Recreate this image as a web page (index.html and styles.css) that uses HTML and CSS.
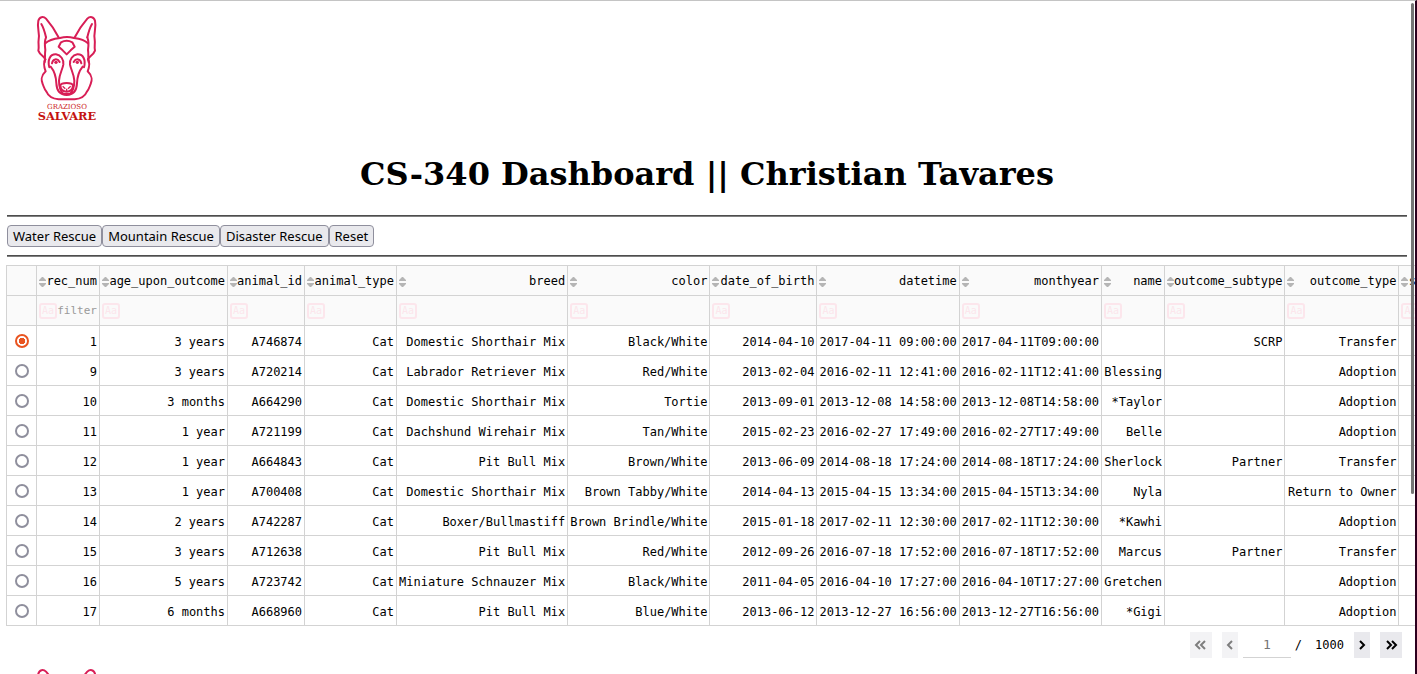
FILE: index.html
```
<!DOCTYPE html>
<html lang="en">
<head>
<meta charset="utf-8">
<title>CS-340 Dashboard</title>
<link rel="stylesheet" href="styles.css">
</head>
<body>
<svg class="defs" aria-hidden="true">
  <symbol id="dog" viewBox="48 42 186 324">
    <g fill="none" stroke="#d81e56" stroke-width="6" stroke-linecap="round" stroke-linejoin="round">
      <path d="M78 112 C74 94 70 82 64 72 M202 112 C206 94 210 82 216 72"/>
      <path d="M76 178 C72 168 60 166 55 152 C58 142 54 130 56 118 C60 98 50 84 55 62 C58 50 70 48 78 56 C92 72 104 88 117 114"/>
      <path d="M204 178 C208 168 220 166 225 152 C222 142 226 130 224 118 C220 98 230 84 225 62 C222 50 210 48 202 56 C188 72 176 88 163 114"/>
      <path d="M76 130 C88 118 104 116 120 114 C134 110 148 110 162 114 C178 116 192 118 204 130"/>
      <path d="M78 112 C74 122 74 136 76 150 C74 162 76 174 74 186 M202 112 C206 122 206 136 204 150 C206 162 204 174 206 186"/>
      <path d="M76 178 C68 190 74 206 77 214 C62 228 64 244 68 252 C72 262 74 270 80 276 C86 292 98 296 116 298 L164 298 C182 296 194 292 200 276 C206 270 208 262 212 252 C216 244 218 228 203 214 C206 206 212 190 204 178"/>
      <path d="M116 140 L123 127 C134 121 146 121 157 127 L164 140 L152 151 L140 163 L128 151 Z"/>
      <path d="M88 202 C82 180 90 162 108 163 C122 165 132 178 130 194 C127 210 118 222 117 242 C117 256 120 272 130 282 L150 282 C160 272 163 256 163 242 C162 222 153 210 150 194 C148 178 158 165 172 163 C190 162 198 180 192 202"/>
      <path d="M96 190 C98 176 112 174 119 186 M184 190 C182 176 168 174 161 186"/>
      <path d="M92 200 C102 212 108 226 109 250 C110 274 122 285 140 285 C158 285 170 274 171 250 C172 226 178 212 188 200"/>
      <path d="M121 256 C124 247 156 247 159 256 C158 270 150 275 140 275 C130 275 122 270 121 256 Z"/>
    </g>
    <g fill="none" stroke="#d81e56" stroke-width="4"><path d="M140 266 V274 M128 259 L136 266 M152 259 L144 266"/></g>
    <circle cx="108" cy="187" r="5" fill="#d81e56"/><circle cx="172" cy="187" r="5" fill="#d81e56"/>
  </symbol>
  <symbol id="sort" viewBox="0 0 7 12"><path fill="#b5b5b5" d="M3 1h1l3 3v1H0V4zM0 7h7v1l-3 3H3L0 8z"/></symbol>
</svg>
<div class="page">
  <svg class="logo" viewBox="48 42 186 324" role="img" aria-label="Grazioso Salvare">
    <use href="#dog" x="48" y="42" width="186" height="324"/>
    <text class="logo-small" x="141" y="326" text-anchor="middle">GRAZIOSO</text>
    <text class="logo-big" x="141" y="361" text-anchor="middle">SALVARE</text>
  </svg>
  <h1 class="title">CS-340 Dashboard || Christian Tavares</h1>
  <hr class="rule">
  <div class="actions"><button>Water Rescue</button><button>Mountain Rescue</button><button>Disaster Rescue</button><button>Reset</button></div>
  <hr class="rule">
  <table class="grid">
    <thead>
      <tr id="heads"><th class="pick"></th></tr>
      <tr id="filters"><th class="pick"></th></tr>
    </thead>
    <tbody id="rows"></tbody>
  </table>
  <nav class="pager" aria-label="Pages">
    <button disabled aria-label="First page"><svg width="13" height="12" viewBox="0 0 13 12"><path d="M6 2 2 6l4 4M11 2 7 6l4 4"/></svg></button>
    <button class="narrow" disabled aria-label="Previous page"><svg width="8" height="12" viewBox="0 0 8 12"><path d="M6 2 2 6l4 4"/></svg></button>
    <input class="page-no" type="text" placeholder="1" aria-label="Page number">
    <span class="slash">/</span>
    <span class="total">1000</span>
    <button class="narrow" aria-label="Next page"><svg width="8" height="12" viewBox="0 0 8 12"><path d="M2 2l4 4-4 4"/></svg></button>
    <button aria-label="Last page"><svg width="13" height="12" viewBox="0 0 13 12"><path d="M2 2l4 4-4 4M7 2l4 4-4 4"/></svg></button>
  </nav>
  <svg class="logo logo-next" viewBox="48 42 186 324" role="img" aria-label="Grazioso Salvare"><use href="#dog" x="48" y="42" width="186" height="324"/></svg>
</div>
<div class="scroll-thumb"></div>
<script src="table.js"></script>
</body>
</html>
```
FILE: styles.css
```
* { box-sizing: border-box; }
html { height: 100%; overflow: hidden; background: #fff; }
body {
  position: relative;
  height: 100%;
  margin: 0;
  overflow: hidden;
  border-top: 1px solid #c4c4c4;
  border-right: 2px solid #2c001e;
  color: #000;
}
.defs { position: absolute; width: 0; height: 0; }
.page { padding: 13px 8px 0 7px; }
.logo { display: block; width: 62px; height: 108px; margin-left: 29px; }
.logo-small { font: 21px "DejaVu Serif", serif; fill: #cc1a20; }
.logo-big { font: bold 34px "DejaVu Serif", serif; fill: #c4120f; }
.title {
  margin: 33px 0 22px;
  font: bold 32px/38px "DejaVu Serif", serif;
  text-align: center;
}
.rule { height: 2px; margin: 0; border: 0; border-top: 1px solid #4d4d4d; background: #808080; }
.actions { display: flex; padding: 8px 0; }
.actions button {
  height: 22px;
  padding: 0 5px;
  border: 1px solid #8f8f9d;
  border-radius: 4px;
  background: #e9e9ed;
  color: #000;
  font: 13px/20px "Noto Sans", sans-serif;
}
.grid {
  margin: 8px 0 0 -1px;
  border-collapse: collapse;
  font: 12px/15px "DejaVu Sans Mono", monospace;
  white-space: nowrap;
}
.grid th, .grid td {
  height: 30px;
  padding: 2px 2px 0;
  border: 1px solid #d3d3d3;
  text-align: right;
  font-weight: normal;
}
.grid td { padding-top: 4px; }
.grid th { background: #fafafa; }
#filters th { padding-top: 0; }
.grid .pick { width: 30px; min-width: 30px; padding: 0; text-align: center; }
.head { display: flex; align-items: center; justify-content: space-between; }
.head svg { flex: none; width: 7px; height: 12px; }
.filter { display: flex; align-items: center; }
.case {
  flex: none;
  width: 18px;
  height: 16px;
  padding: 0;
  border: 2px solid #fce6ec;
  border-radius: 3px;
  background: none;
  color: #fce6ec;
  font: 10px/12px "DejaVu Sans Mono", monospace;
}
.filter input {
  flex: 1;
  width: 0;
  min-width: 0;
  padding: 0;
  border: 0;
  background: none;
  text-align: right;
  font: 11px/15px "DejaVu Sans Mono", monospace;
}
.filter input::placeholder { color: #999; opacity: 1; }
.grid input[type="radio"] {
  display: block;
  appearance: none;
  width: 14px;
  height: 14px;
  margin: 0 auto;
  border: 2px solid #8f8f9d;
  border-radius: 50%;
  background: #fff;
}
.grid input[type="radio"]:checked {
  border-color: #e95420;
  background: radial-gradient(circle, #e95420 3px, #fff 3px);
}
.pager {
  display: flex;
  align-items: center;
  justify-content: flex-end;
  padding: 5px 5px 0 0;
  font: 12px/26px "DejaVu Sans Mono", monospace;
}
.pager button {
  display: flex;
  align-items: center;
  justify-content: center;
  width: 22px;
  height: 26px;
  padding: 0;
  border: 0;
  background: #e9e9ed;
}
.pager .narrow { width: 16px; margin: 0 10px; }
.pager button:disabled { opacity: 0.5; }
.pager path { fill: none; stroke: #000; stroke-width: 2; }
.page-no {
  width: 48px;
  height: 27px;
  margin-left: -5px;
  padding: 0;
  border: 0;
  border-bottom: 1px solid #d3d3d3;
  background: none;
  text-align: center;
  font: 13px/26px "DejaVu Sans Mono", monospace;
}
.page-no::placeholder { color: #757575; opacity: 1; }
.slash { margin: 0 13px 0 4px; }
.logo-next { margin-top: 9px; }
.scroll-thumb {
  position: absolute;
  top: 2px;
  right: 1px;
  width: 3px;
  height: 73%;
  border-radius: 2px;
  background: #757575;
}
```
FILE: table.js
```
// column name and its least width, rounded up to a whole pixel
const columns = [["rec_num", 63], ["age_upon_outcome", 128], ["animal_id", 77], ["animal_type", 92],
  ["breed", 171], ["color", 142], ["date_of_birth", 107], ["datetime", 142], ["monthyear", 142],
  ["name", 63], ["outcome_subtype", 120], ["outcome_type", 114], ["sex_upon_outcome", 128]];

const animals = [
  ["1", "3 years", "A746874", "Cat", "Domestic Shorthair Mix", "Black/White", "2014-04-10", "2017-04-11 09:00:00", "", "SCRP", "Transfer"],
  ["9", "3 years", "A720214", "Cat", "Labrador Retriever Mix", "Red/White", "2013-02-04", "2016-02-11 12:41:00", "Blessing", "", "Adoption"],
  ["10", "3 months", "A664290", "Cat", "Domestic Shorthair Mix", "Tortie", "2013-09-01", "2013-12-08 14:58:00", "*Taylor", "", "Adoption"],
  ["11", "1 year", "A721199", "Cat", "Dachshund Wirehair Mix", "Tan/White", "2015-02-23", "2016-02-27 17:49:00", "Belle", "", "Adoption"],
  ["12", "1 year", "A664843", "Cat", "Pit Bull Mix", "Brown/White", "2013-06-09", "2014-08-18 17:24:00", "Sherlock", "Partner", "Transfer"],
  ["13", "1 year", "A700408", "Cat", "Domestic Shorthair Mix", "Brown Tabby/White", "2014-04-13", "2015-04-15 13:34:00", "Nyla", "", "Return to Owner"],
  ["14", "2 years", "A742287", "Cat", "Boxer/Bullmastiff", "Brown Brindle/White", "2015-01-18", "2017-02-11 12:30:00", "*Kawhi", "", "Adoption"],
  ["15", "3 years", "A712638", "Cat", "Pit Bull Mix", "Red/White", "2012-09-26", "2016-07-18 17:52:00", "Marcus", "Partner", "Transfer"],
  ["16", "5 years", "A723742", "Cat", "Miniature Schnauzer Mix", "Black/White", "2011-04-05", "2016-04-10 17:27:00", "Gretchen", "", "Adoption"],
  ["17", "6 months", "A668960", "Cat", "Pit Bull Mix", "Blue/White", "2013-06-12", "2013-12-27 16:56:00", "*Gigi", "", "Adoption"]
];

const heads = document.getElementById("heads");
const filters = document.getElementById("filters");
columns.forEach(([name, width], i) => {
  heads.insertAdjacentHTML("beforeend",
    `<th scope="col" style="min-width:${width}px"><div class="head"><svg aria-hidden="true"><use href="#sort"/></svg><span>${name}</span></div></th>`);
  filters.insertAdjacentHTML("beforeend",
    `<th><div class="filter"><button class="case" aria-label="Match case in ${name}">Aa</button><input type="text" aria-label="Filter ${name}"${i === 0 ? ' placeholder="filter"' : ""}></div></th>`);
});

// monthyear holds the same moment as datetime, in ISO form
document.getElementById("rows").innerHTML = animals.map((a, i) => {
  const cells = [...a.slice(0, 8), a[7].replace(" ", "T"), ...a.slice(8), ""];
  return `<tr><td class="pick"><input type="radio" name="row" aria-label="Select record ${a[0]}"${i === 0 ? " checked" : ""}></td>` +
    cells.map(c => `<td>${c}</td>`).join("") + "</tr>";
}).join("");
```
